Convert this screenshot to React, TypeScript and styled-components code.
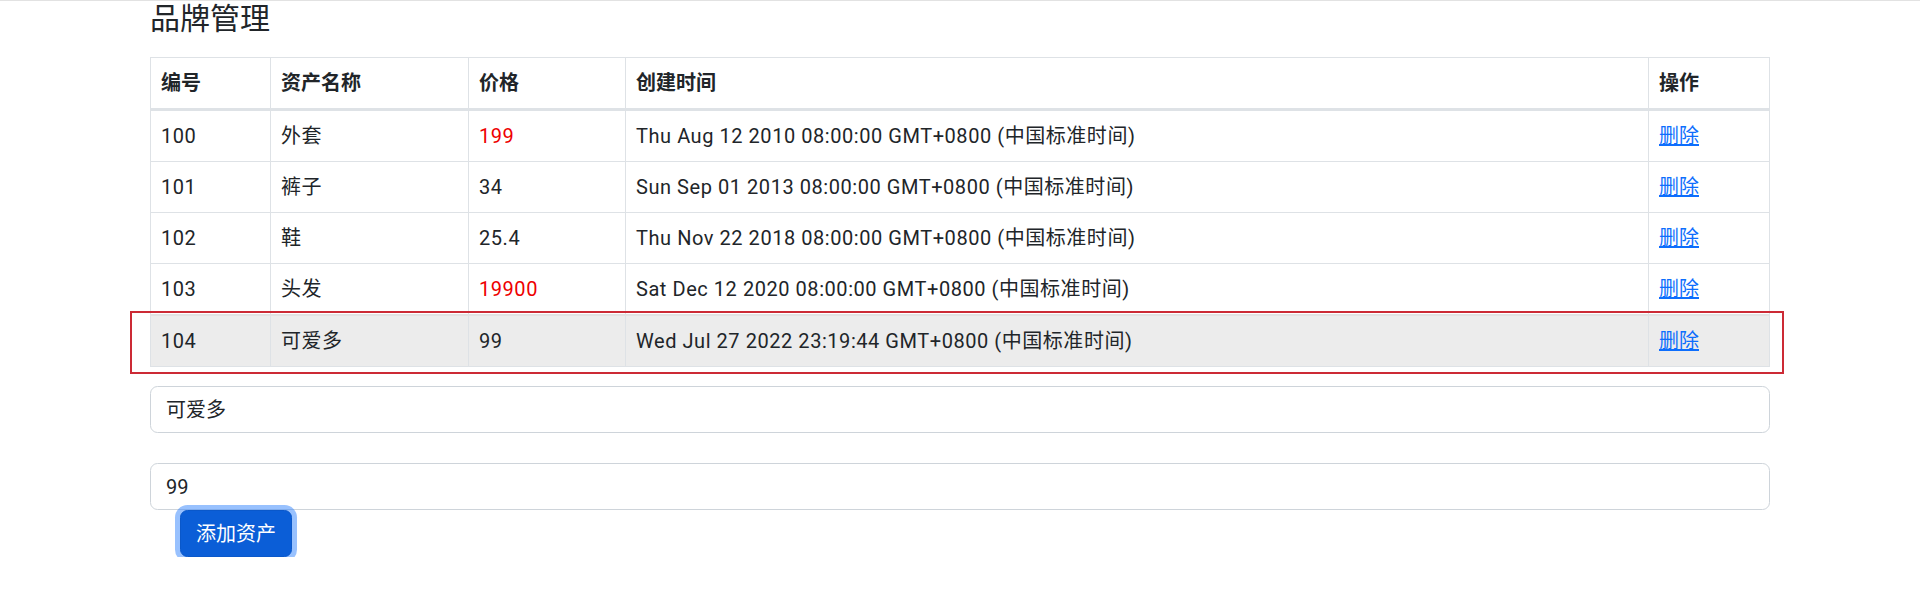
import React from "react";
import styled, { createGlobalStyle } from "styled-components";

const GlobalStyle = createGlobalStyle`
  html, body { margin: 0; padding: 0; background: #fff; }
  body {
    font-family: Roboto, "Noto Sans CJK SC", sans-serif;
    font-size: 20px;
    line-height: 30px;
    color: #212529;
    border-top: 1px solid #e2e2e2;
  }
  * { box-sizing: border-box; }
`;

const Container = styled.div`
  width: 1620px;
  margin: 0 auto;
`;

const Title = styled.h4`
  margin: 0 0 20px 0;
  font-size: 30px;
  line-height: 36px;
  font-weight: 400;
  color: #212529;
`;

const TableWrap = styled.div`
  position: relative;
`;

const Table = styled.table`
  width: 100%;
  border-collapse: collapse;
  table-layout: fixed;
`;

const Th = styled.th<{ $w?: number }>`
  ${(p) => (p.$w ? `width: ${p.$w}px;` : "")}
  text-align: left;
  font-weight: 700;
  padding: 10px;
  border: 1px solid #dee2e6;
  border-bottom: 3px solid #dee2e6;
`;

const Tr = styled.tr<{ $active?: boolean }>`
  background: ${(p) => (p.$active ? "#ececec" : "#fff")};
  ${(p) => (p.$active ? "& > td { border-top: 2px solid #e2e2e2; }" : "")}
`;

const Td = styled.td<{ $red?: boolean }>`
  padding: 10px;
  border: 1px solid #dee2e6;
  color: ${(p) => (p.$red ? "#ee0000" : "#212529")};
  white-space: nowrap;
  letter-spacing: 0.55px;
`;

const Link = styled.a`
  color: #0d6efd;
  text-decoration: underline;
  cursor: pointer;
  letter-spacing: 0;
`;

const Highlight = styled.div`
  position: absolute;
  left: -20px;
  right: -14px;
  bottom: -7px;
  height: 63px;
  border: 2px solid #cc2a35;
  pointer-events: none;
`;

const Input = styled.input<{ $gap: number }>`
  display: block;
  width: 100%;
  margin-top: ${(p) => p.$gap}px;
  padding: 7.5px 15px;
  font-family: Roboto, "Noto Sans CJK SC", sans-serif;
  font-size: 20px;
  line-height: 30px;
  color: #212529;
  background: #fff;
  border: 1px solid #ced4da;
  border-radius: 7.5px;
  outline: none;
`;

const Button = styled.button`
  display: block;
  margin-left: 30px;
  padding: 7.5px 15px;
  font-family: Roboto, "Noto Sans CJK SC", sans-serif;
  font-size: 20px;
  line-height: 30px;
  color: #fff;
  background: #0b5ed7;
  border: 1px solid #0a58ca;
  border-radius: 7.5px;
  box-shadow: 0 0 0 5px rgba(49, 132, 253, 0.5);
`;

const rows = [
  { id: 100, name: "外套", price: "199", red: true, time: "Thu Aug 12 2010 08:00:00 GMT+0800 (中国标准时间)" },
  { id: 101, name: "裤子", price: "34", red: false, time: "Sun Sep 01 2013 08:00:00 GMT+0800 (中国标准时间)" },
  { id: 102, name: "鞋", price: "25.4", red: false, time: "Thu Nov 22 2018 08:00:00 GMT+0800 (中国标准时间)" },
  { id: 103, name: "头发", price: "19900", red: true, time: "Sat Dec 12 2020 08:00:00 GMT+0800 (中国标准时间)" },
  { id: 104, name: "可爱多", price: "99", red: false, time: "Wed Jul 27 2022 23:19:44 GMT+0800 (中国标准时间)" },
];

export default function App() {
  return (
    <>
      <GlobalStyle />
      <Container>
        <Title>品牌管理</Title>
        <TableWrap>
          <Table>
            <thead>
              <tr>
                <Th $w={120}>编号</Th>
                <Th $w={198}>资产名称</Th>
                <Th $w={157}>价格</Th>
                <Th>创建时间</Th>
                <Th $w={121}>操作</Th>
              </tr>
            </thead>
            <tbody>
              {rows.map((r, i) => (
                <Tr key={r.id} $active={i === rows.length - 1}>
                  <Td>{r.id}</Td>
                  <Td>{r.name}</Td>
                  <Td $red={r.red}>{r.price}</Td>
                  <Td>{r.time}</Td>
                  <Td>
                    <Link>删除</Link>
                  </Td>
                </Tr>
              ))}
            </tbody>
          </Table>
          <Highlight />
        </TableWrap>
        <Input $gap={19} defaultValue="可爱多" />
        <Input $gap={30} defaultValue="99" />
        <Button>添加资产</Button>
      </Container>
    </>
  );
}
